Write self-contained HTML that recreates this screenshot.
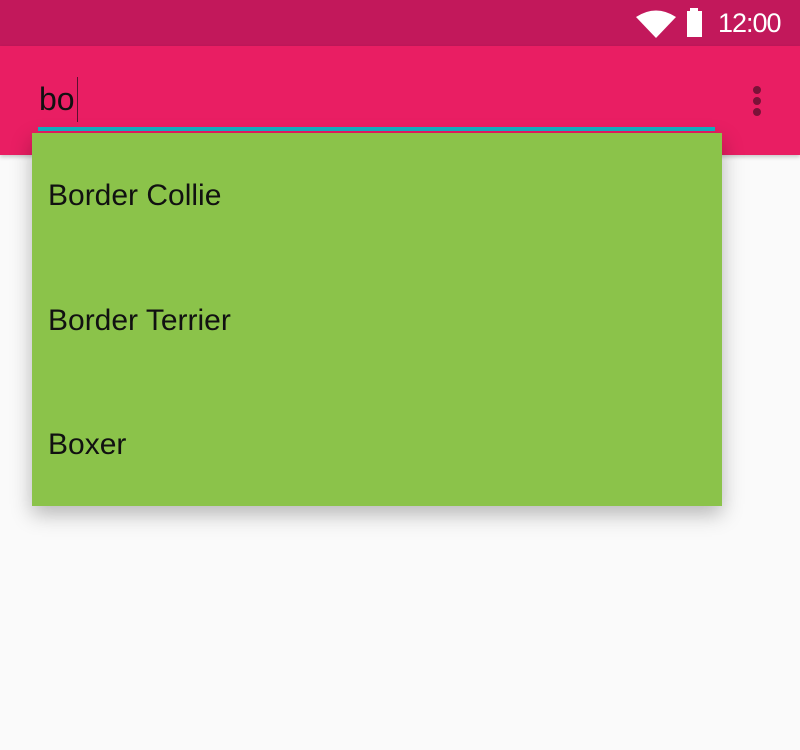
<!DOCTYPE html>
<html><head><style>
body{margin:0;width:800px;height:750px;background:#fafafa;position:relative;overflow:hidden;font-family:"Liberation Sans",Roboto,sans-serif}
.sb{position:absolute;left:0;top:0;width:800px;height:46px;background:#c2185b}
.tb{position:absolute;left:0;top:46px;width:800px;height:109px;background:#e91e63;box-shadow:0 2px 4px rgba(0,0,0,.2)}
.time{position:absolute;left:718px;top:8px;color:#fff;font-size:27px;letter-spacing:-1px}
.q{position:absolute;left:39px;top:81px;font-size:32px;color:#111}
.cur{position:absolute;left:77px;top:77px;width:1px;height:45px;background:#5a1030}
.dot{position:absolute;left:753px;width:8px;height:8px;border-radius:50%;background:#7a1238}
.line{position:absolute;left:38px;top:127px;width:677px;height:4px;background:#10b3c4}
.dd{position:absolute;left:32px;top:133px;width:690px;height:373px;background:#8bc34a;box-shadow:0 8px 20px rgba(0,0,0,.28)}
.it{position:absolute;left:16px;font-size:30px;color:#111}
</style></head><body>
<div class="sb">
<svg style="position:absolute;left:636px;top:10px" width="40" height="28" viewBox="0 0 40 28"><path d="M0 7 Q20 -6 40 7 L20 28 Z" fill="#fff"/></svg>
<svg style="position:absolute;left:685px;top:8px" width="20" height="30"><rect x="5" y="0" width="8" height="4" fill="#fff"/><rect x="2" y="3" width="15" height="26" fill="#fff"/></svg>
<div class="time">12:00</div>
</div>
<div class="tb"></div>
<div class="q">bo</div><div class="cur"></div>
<div class="dot" style="top:86px"></div><div class="dot" style="top:97px"></div><div class="dot" style="top:108px"></div>
<div class="line"></div>
<div class="dd">
<div class="it" style="top:46px">Border Collie</div>
<div class="it" style="top:171px">Border Terrier</div>
<div class="it" style="top:295px">Boxer</div>
</div>
</body></html>
